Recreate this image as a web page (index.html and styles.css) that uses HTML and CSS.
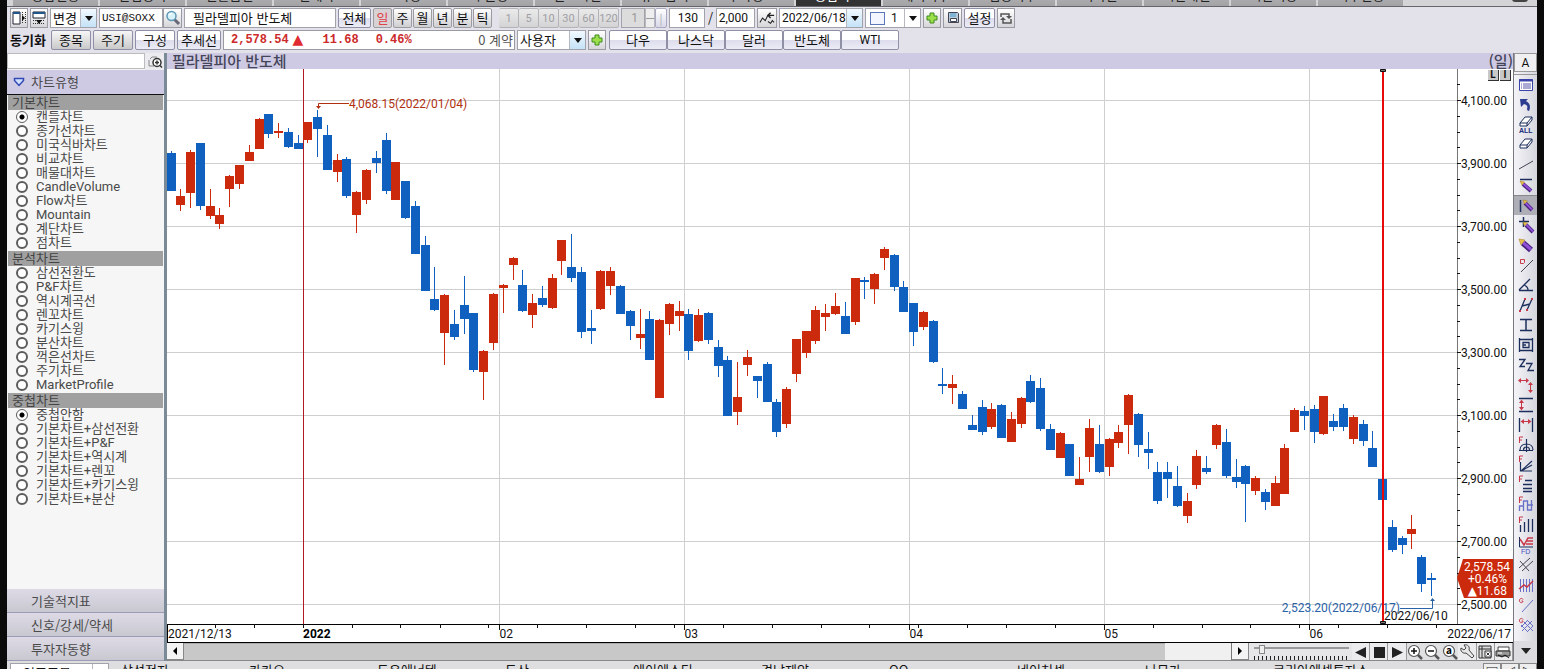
FILE: index.html
```html
<!DOCTYPE html>
<html lang="ko">
<head>
<meta charset="utf-8">
<title>필라델피아 반도체</title>
<link rel="stylesheet" href="styles.css">
</head>
<body>
<div class="shell">
  <nav class="tabs" aria-label="화면">
    <a href="#">종합현황</a><a href="#">관심종목</a><a href="#">선물옵션</a><a href="#">현재가</a><a href="#">호가창</a><a href="#">주문창</a><a href="#">잔고확인</a><a href="#">뉴스검색</a><a href="#">투자정보</a><a href="#" class="current">종합차트</a><a href="#">해외지수</a><a href="#">업종지수</a><a href="#">외국인</a><a href="#">시간대별</a><a href="#">시간외창</a><a href="#">지수현황</a>
    <span class="tabs-knob"></span>
  </nav>

  <div class="bar">
    <div class="row">
      <button class="ib" aria-label="왼쪽 패널"><svg viewBox="0 0 16 16"><path d="M2 2h7v12H2z" fill="#fff" stroke="#223"/><path d="M2 3h7" stroke="#258" stroke-width="2"/><path d="M11.500 2v12M14.500 2v12" stroke="#333" stroke-dasharray="1 1"/><path d="M11 5l3 3-3 3z" fill="#111"/></svg></button>
      <button class="ib" aria-label="위쪽 패널"><svg viewBox="0 0 16 16"><path d="M2 2h12v6H2z" fill="#fff" stroke="#223"/><path d="M2 3h12" stroke="#258" stroke-width="2"/><path d="M2 10.500h12M2 13.500h12" stroke="#333" stroke-dasharray="1 1"/><path d="M5 10h6l-3 4z" fill="#111"/></svg></button>
      <span class="combo w47"><select aria-label="변경"><option>변경</option></select><i class="drop blue"></i></span>
      <span class="joined"><input class="w64 mono" aria-label="종목코드" value="USI@SOXX"><button class="ib" aria-label="검색"><svg viewBox="0 0 16 16"><path d="M9 9l5 5" stroke="#667" stroke-width="3"/><circle cx="6.500" cy="6" r="4.500" fill="#d8f2fa" stroke="#5b98b5" stroke-width="1.500"/><path d="M4 5l3-2" stroke="#fff" stroke-width="1.500"/></svg></button></span>
      <input class="w152 name" aria-label="종목명" value="필라델피아 반도체">
      <button class="btn w33">전체</button>
      <span class="periods"><button class="key on">일</button><button class="key">주</button><button class="key">월</button><button class="key">년</button><button class="key">분</button><button class="key">틱</button></span>
      <span class="minutes"><button disabled>1</button><button disabled>5</button><button disabled>10</button><button disabled>30</button><button disabled>60</button><button disabled>120</button></span>
      <span class="joined spin"><input class="w24 num" aria-label="분 간격" value="1" disabled><button aria-label="간격 조절" class="updown"><i></i></button><button aria-label="구분" class="grip">|</button></span>
      <input class="w36 num" aria-label="봉 수" value="130">
      <span class="slash">/</span>
      <input class="w39 num" aria-label="전체 봉 수" value="2,000">
      <button class="ib w20" aria-label="차트 이동"><svg viewBox="0 0 18 16"><path d="M1 13l3-5 3 3 3-6M10 12l3 2 2-3 2 2" fill="none" stroke="#222" stroke-width="1.200"/><path d="M17 5h-6M13 2l-3 3 3 3" fill="none" stroke="#222" stroke-width="1.500"/></svg></button>
      <span class="combo w84"><select class="num" aria-label="날짜"><option>2022/06/18</option></select><i class="drop blue"></i></span>
      <span class="combo w56"><b class="swatch"></b><select class="num swatched" aria-label="선 굵기"><option>1</option></select><i class="drop"></i></span>
      <button class="ib" aria-label="추가"><svg viewBox="0 0 16 16"><path d="M6 3h4v3h3v4h-3v3H6v-3H3V6h3z" fill="#9be04a" stroke="#3f8a1c"/></svg></button>
      <button class="ib w19" aria-label="저장"><svg viewBox="0 0 16 16"><path d="M3.500 2.500h9l1 1v9h-10z" fill="#b9c9d6" stroke="#445"/><path d="M5 3h6v4H5z" fill="#7fb4d6"/><path d="M5.500 8.500h6v3h-6z" fill="#fff" stroke="#445"/></svg></button>
      <button class="btn w31">설정</button>
      <button class="ib" aria-label="새로고침"><svg viewBox="0 0 16 16"><path d="M3 7V4h8v3M13 9v4H5v-3" fill="none" stroke="#555" stroke-width="1.500"/><path d="M8 6h6l-3 3zM2 10h6L5 7z" fill="#555"/></svg></button>
    </div>
    <div class="row">
      <strong class="sync">동기화</strong>
      <button class="btn gray w40">종목</button>
      <button class="btn gray w40">주기</button>
      <button class="btn w40">구성</button>
      <button class="btn w44">추세선</button>
      <div class="quote"><b class="price">2,578.54</b><b class="tri">▲</b><b class="diff">11.68</b><b class="rate">0.46%</b><span class="qty">0 계약</span></div>
      <span class="combo w69"><select aria-label="사용자"><option>사용자</option></select><i class="drop blue"></i></span>
      <button class="ib" aria-label="사용자 추가"><svg viewBox="0 0 16 16"><path d="M6 3h4v3h3v4h-3v3H6v-3H3V6h3z" fill="#9be04a" stroke="#3f8a1c"/></svg></button>
      <span class="shortcuts"><button class="btn">다우</button><button class="btn">나스닥</button><button class="btn">달러</button><button class="btn">반도체</button><button class="btn latin">WTI</button></span>
    </div>
  </div>

  <div class="main">
    <aside class="side">
      <div class="find"><input aria-label="차트 검색"><button aria-label="검색"><svg viewBox="0 0 16 16"><path d="M3 5l2-2h5" fill="none" stroke="#888"/><path d="M2 6v6h5" fill="none" stroke="#888"/><circle cx="10" cy="8.500" r="4" fill="#fff" stroke="#333" stroke-width="1.500"/><path d="M8 8.500h4M10 6.500v4M13 11.500l2 2" stroke="#333" stroke-width="1.500"/></svg></button></div>
      <button class="fold open"><svg viewBox="0 0 12 10"><path d="M1.500 1.500h9v2L6 8.500l-4.500-5z" fill="#cfe0ff" stroke="#3348b5" stroke-width="1.500"/></svg>차트유형</button>
      <div class="types">
        <fieldset><legend>기본차트</legend>
          <label><input type="radio" name="basic" checked>캔들차트</label>
          <label><input type="radio" name="basic">종가선차트</label>
          <label><input type="radio" name="basic">미국식바차트</label>
          <label><input type="radio" name="basic">비교차트</label>
          <label><input type="radio" name="basic">매물대차트</label>
          <label><input type="radio" name="basic">CandleVolume</label>
          <label><input type="radio" name="basic">Flow차트</label>
          <label><input type="radio" name="basic">Mountain</label>
          <label><input type="radio" name="basic">계단차트</label>
          <label><input type="radio" name="basic">점차트</label>
        </fieldset>
        <fieldset><legend>분석차트</legend>
          <label><input type="radio" name="study">삼선전환도</label>
          <label><input type="radio" name="study">P&amp;F차트</label>
          <label><input type="radio" name="study">역시계곡선</label>
          <label><input type="radio" name="study">렌꼬차트</label>
          <label><input type="radio" name="study">카기스윙</label>
          <label><input type="radio" name="study">분산차트</label>
          <label><input type="radio" name="study">꺽은선차트</label>
          <label><input type="radio" name="study">주기차트</label>
          <label><input type="radio" name="study">MarketProfile</label>
        </fieldset>
        <fieldset><legend>중첩차트</legend>
          <label><input type="radio" name="overlay" checked>중첩안함</label>
          <label><input type="radio" name="overlay">기본차트+삼선전환</label>
          <label><input type="radio" name="overlay">기본차트+P&amp;F</label>
          <label><input type="radio" name="overlay">기본차트+역시계</label>
          <label><input type="radio" name="overlay">기본차트+렌꼬</label>
          <label><input type="radio" name="overlay">기본차트+카기스윙</label>
          <label><input type="radio" name="overlay">기본차트+분산</label>
        </fieldset>
      </div>
      <button class="fold">기술적지표</button>
      <button class="fold">신호/강세/약세</button>
      <button class="fold">투자자동향</button>
    </aside>

    <section class="stage">
      <header class="title"><h1>필라델피아 반도체</h1><b>(일)</b></header>
      <div class="plot">
        <svg id="chart" viewBox="167 69 1346 574" role="img" aria-label="일봉 차트"></svg>
        <div class="scale"><button>L</button><button>I</button></div>
      </div>
      <div class="scroll">
        <button class="arrow" aria-label="이전"><svg viewBox="0 0 16 16"><path d="M10 4v8L6 8z"/></svg></button>
        <div class="track"><span class="thumb"></span><span class="rest"></span></div>
        <button class="arrow" aria-label="다음"><svg viewBox="0 0 16 16"><path d="M6 4v8l4-4z"/></svg></button>
        <div class="zoomer"><input type="range" aria-label="확대" min="0" max="100" value="6"><i></i></div>
        <div class="tools">
          <button aria-label="뒤로"><svg viewBox="0 0 18 18"><path d="M14 4v11L3 9.500z" fill="#222"/></svg></button>
          <button aria-label="정지"><svg viewBox="0 0 18 18"><path d="M4 4h11v11H4z" fill="#222"/></svg></button>
          <button aria-label="재생"><svg viewBox="0 0 18 18"><path d="M4 4v11l11-5.500z" fill="#222"/></svg></button>
          <button class="flat" aria-label="확대"><svg viewBox="0 0 18 18"><path d="M11 11l5 5" stroke="#555" stroke-width="2.500"/><circle cx="8" cy="8" r="5.500" fill="#fff" stroke="#555" stroke-width="1.200"/><path d="M5 8h6M8 5v6" stroke="#111" stroke-width="1.500"/></svg></button>
          <button class="flat" aria-label="축소"><svg viewBox="0 0 18 18"><path d="M11 11l5 5" stroke="#555" stroke-width="2.500"/><circle cx="8" cy="8" r="5.500" fill="#fff" stroke="#555" stroke-width="1.200"/><path d="M5 8h6" stroke="#111" stroke-width="1.500"/></svg></button>
          <button class="flat" aria-label="전체 보기"><svg viewBox="0 0 18 18"><path d="M11 11l5 5" stroke="#555" stroke-width="2.500"/><circle cx="8" cy="8" r="5.500" fill="#fff" stroke="#555" stroke-width="1.200"/><text x="5" y="11" font-size="10" font-weight="bold">a</text></svg></button>
          <button aria-label="도구"><svg viewBox="0 0 18 18"><path d="M3 5l3 2 2-2-2-3c4-1 6 2 5 5l5 6-2 2-6-5C5 11 2 8 3 5z" fill="#e8e8e8" stroke="#444"/></svg></button>
          <button aria-label="저장"><svg viewBox="0 0 18 18"><path d="M3 3h12v12H3z" fill="#ddd" stroke="#333"/><path d="M3 6h12M6 3v12" stroke="#333"/><path d="M9 8h6v6H9z" fill="#fff" stroke="#333"/><path d="M10.500 9.500l3 3m0-3l-3 3" stroke="#333"/></svg></button>
          <button aria-label="인쇄"><svg viewBox="0 0 18 18"><path d="M4 4h11v4H4z" fill="#fff" stroke="#444"/><path d="M2 8h14v5H2z" fill="#999" stroke="#333"/><path d="M4 12l4 2 3-2 4 3" fill="none" stroke="#111"/><path d="M4 10h4" stroke="#fff"/></svg></button>
        </div>
      </div>
    </section>

    <aside class="draw">
      <button class="mode">A</button>
      <div class="pens">
        <button aria-label="목록"><svg viewBox="0 0 20 20"><path d="M3.500 4.500h13v11h-13z" fill="#fff" stroke="#3a44a8"/><path d="M3 5.500h14" stroke="#3a44a8" stroke-width="2"/><path d="M5 9h1m1 0h8M5 11h1m1 0h8M5 13h1m1 0h8" stroke="#55a"/></svg></button>
        <button aria-label="되돌리기"><svg viewBox="0 0 20 20"><path d="M4 4h8l-2 2c4 2 5 6 3 10-1 0-2-1-2-2 1-3 0-4-3-5l-3 3z" fill="#2c3d8f"/></svg></button>
        <button aria-label="모두 지우기"><svg viewBox="0 0 20 20"><path d="M4 8l5-6h7l-5 6zM4 8v3h7V8M11 11l5-6V2" fill="#fff" stroke="#1c2f5c"/><text x="3" y="18" font-size="7" font-weight="bold" fill="#1c2f7c">ALL</text></svg></button>
        <button aria-label="지우기"><svg viewBox="0 0 20 20"><path d="M4 10l5-6h7l-5 6zM4 10v3h7v-3M11 13l5-6V4" fill="#fff" stroke="#1c2f5c"/></svg></button>
        <button aria-label="추세선"><svg viewBox="0 0 20 20"><path d="M3 14l14-8" stroke="#445" fill="none"/></svg></button>
        <button aria-label="수평선"><svg viewBox="0 0 20 20"><path d="M4 4.500h12" stroke="#1c2f5c" stroke-width="1.500"/><path d="M7 9l8 7" stroke="#4a2480" stroke-width="4"/><path d="M7 8.500l8 7" stroke="#9050d8" stroke-width="2"/><path d="M4 6l4.500 1L6 10z" fill="#e8c24a" stroke="#a07820" stroke-width=".5"/></svg></button>
        <button class="on" aria-label="수직선"><svg viewBox="0 0 20 20"><path d="M4.500 4v12" stroke="#1c2f5c" stroke-width="1.500"/><path d="M9 7l7 7" stroke="#4a2480" stroke-width="4"/><path d="M9 6.500l7 7" stroke="#9050d8" stroke-width="2"/><path d="M7 4l4.500 1L8.500 8z" fill="#e8c24a" stroke="#a07820" stroke-width=".5"/></svg></button>
        <button aria-label="십자선"><svg viewBox="0 0 20 20"><path d="M3 6.500h10M7.500 2v10" stroke="#1c2f5c" stroke-width="1.500"/><path d="M10 10l7 7" stroke="#4a2480" stroke-width="4"/><path d="M10 9.500l7 7" stroke="#9050d8" stroke-width="2"/><path d="M7 7l4.500 1-3 3z" fill="#e8c24a" stroke="#a07820" stroke-width=".5"/></svg></button>
        <button aria-label="펜"><svg viewBox="0 0 20 20"><path d="M7 8l8 7" stroke="#4a2480" stroke-width="6"/><path d="M7 7.500l8 7" stroke="#9050d8" stroke-width="3"/><path d="M3 4l6 1-4 5z" fill="#e8c24a" stroke="#a07820" stroke-width=".5"/></svg></button>
        <button aria-label="선분"><svg viewBox="0 0 20 20"><path d="M4.500 4.500h4v3l-1 1h-3z" fill="none" stroke="#c8394a"/><path d="M5 17L17 5" stroke="#445"/></svg></button>
        <button aria-label="각도선"><svg viewBox="0 0 20 20"><path d="M3 15.500h14M3 15L14 4M8 10c3 1 4 3 4 5" fill="none" stroke="#1c2f5c" stroke-width="1.300"/></svg></button>
        <button aria-label="평행선"><svg viewBox="0 0 20 20"><path d="M4 16L9 4M11 15l5-11M6 11l8-2" fill="none" stroke="#1c2f5c" stroke-width="1.300"/><path d="M3 15h2v2H3zM8 3h2v2H8zM10 14h2v2h-2zM15 3h2v2h-2z" fill="#c8394a"/></svg></button>
        <button aria-label="구간"><svg viewBox="0 0 20 20"><path d="M4 4.500h12M4 15.500h12M10 4v12" stroke="#1c2f5c" stroke-width="1.500"/></svg></button>
        <button aria-label="사각형"><svg viewBox="0 0 20 20"><path d="M3.500 3v14M16.500 3v14M3 4.500h14M3 15.500h14M7 7.500h6v5H7zM7 10h3" fill="none" stroke="#1c2f5c" stroke-width="1.300"/></svg></button>
        <button aria-label="지그재그"><svg viewBox="0 0 20 20"><path d="M3 4.500h6l-5 7h5M10 8.500h6l-4 7h6" fill="none" stroke="#1c2f5c" stroke-width="1.300"/></svg></button>
        <button aria-label="이동"><svg viewBox="0 0 20 20"><path d="M4 5.500h8M14.500 9v7" stroke="#c8394a"/><path d="M2 5.500L5 3v5zM13 5.500L10 3v5zM14.500 7L12 10h5zM14.500 18L12 15h5z" fill="#c8394a"/></svg></button>
        <button aria-label="가격폭"><svg viewBox="0 0 20 20"><path d="M3 3.500h14M3 16.500h14" stroke="#1c2f5c" stroke-width="1.300"/><path d="M5.500 6v8" stroke="#c8394a"/><path d="M5.500 4.500L3 8h5zM5.500 15.500L3 12h5z" fill="#c8394a"/></svg></button>
        <button aria-label="기간폭"><svg viewBox="0 0 20 20"><path d="M3.500 3v14M16.500 3v14" stroke="#1c2f5c" stroke-width="1.300"/><path d="M6 6.500h8" stroke="#c8394a"/><path d="M4.500 6.500L8 4v5zM15.500 6.500L12 4v5z" fill="#c8394a"/></svg></button>
        <button aria-label="피보나치 원"><svg viewBox="0 0 20 20"><path d="M7 2H3.500v6M3.500 5H6" fill="none" stroke="#c8394a"/><path d="M3 15.500h14M10.500 4v13M4 15c0-8 13-8 13 0M7.500 15c0-4 6-4 6 0" fill="none" stroke="#1c2f5c" stroke-width="1.200"/></svg></button>
        <button aria-label="피보나치 팬"><svg viewBox="0 0 20 20"><path d="M7 1H3.500v6M3.500 4H6" fill="none" stroke="#c8394a"/><path d="M4.500 7v9H16M5 16L16 6M5 16l11-6" fill="none" stroke="#1c2f5c" stroke-width="1.200"/></svg></button>
        <button aria-label="피보나치 되돌림"><svg viewBox="0 0 20 20"><path d="M7 1H3.500v6M3.500 4H6" fill="none" stroke="#c8394a"/><path d="M9 5.500h7M7 9.500h9M7 13.500h9M7 16.500h9" stroke="#1c2f5c" stroke-width="1.500"/></svg></button>
        <button aria-label="피보나치 목표"><svg viewBox="0 0 20 20"><path d="M7 2H3.500v6M3.500 5H6" fill="none" stroke="#c8394a"/><path d="M3.500 16V11h4v5M7.500 14V6h4v9h4V5M11 10h6" fill="none" stroke="#6870c8" stroke-width="1.300"/></svg></button>
        <button aria-label="피보나치 시간대"><svg viewBox="0 0 20 20"><path d="M7 2H3.500v6M3.500 5H6" fill="none" stroke="#c8394a"/><path d="M4.500 10v7M8.500 7v10M12.500 4v13M16.500 4v13" stroke="#1c2f5c" stroke-width="1.300"/></svg></button>
        <button aria-label="FD"><svg viewBox="0 0 20 20"><path d="M3.500 2v10H17" fill="none" stroke="#1c2f5c"/><path d="M4 4l4 6 4-7h5M10 6h7M10 9h7" fill="none" stroke="#c8394a" stroke-width="1.500"/><text x="5" y="19" font-size="7" fill="#444cc0">FD</text></svg></button>
        <button aria-label="교차선"><svg viewBox="0 0 20 20"><path d="M3 13L14 3M6 16L17 6M4 6l9 10" fill="none" stroke="#445"/></svg></button>
        <button aria-label="회귀선"><svg viewBox="0 0 20 20"><path d="M4.500 4v13M7.500 4v13M10.500 4v13M13.500 4v13M16.500 4v13" stroke="#6870c8"/><path d="M3 14l5-4 3 2 6-6" fill="none" stroke="#c8394a" stroke-width="1.500"/></svg></button>
        <button aria-label="갠 라인"><svg viewBox="0 0 20 20"><path d="M7 4.500c-1-2-4-1-3.500 1.500C4 8.500 7 8 7 6H5.500" fill="none" stroke="#c8394a"/><path d="M6 17L17 5" stroke="#6870c8"/></svg></button>
        <button aria-label="갠 그리드"><svg viewBox="0 0 20 20"><path d="M7 4.500c-1-2-4-1-3.500 1.500C4 8.500 7 8 7 6H5.500" fill="none" stroke="#c8394a"/><path d="M5 12l7-7M6 16L16 6M11 17l6-6M8 7l9 9M5 10l7 7M12 6l5 5" stroke="#6870c8"/></svg></button>
      </div>
      <button class="more" aria-label="더 보기"><i></i></button>
    </aside>
  </div>

  <footer class="ticker">
    <span class="combo watch"><select aria-label="관심종목"><option>업종종목</option></select><i class="drop"></i></span>
    <div class="names"><span>삼성전자</span><span>카카오</span><span>두유에너텍</span><span>두산</span><span>에이에스티</span><span>경남제약</span><span>OO</span><span>네이처셀</span><span>나무가</span><span>코리아에셋투자스</span></div>
    <span class="pager"><button>□</button><button>◁</button><button>▷</button></span>
  </footer>
</div>
<script src="chart.js"></script>
</body>
</html>
```
FILE: styles.css
```css
* { box-sizing: border-box; }
body { margin: 0; background: #0a0a0a; color: #111; font: 13px/14px "Noto Sans CJK KR", sans-serif; }
button, input, select { margin: 0; padding: 0; font: inherit; color: inherit; border-radius: 0; }
button { display: flex; align-items: center; justify-content: center; white-space: nowrap; overflow: hidden; }
input, select { min-width: 0; border: 1px solid #a2a2aa; background: #fff; }
i { font-style: normal; }

.shell { display: flex; flex-direction: column; height: 100vh; margin: 0 7px; overflow: hidden; background: #e3e2ea; }

.tabs { display: flex; align-items: flex-end; gap: 2px; height: 7px; padding-left: 6px; overflow: hidden; background: #d4d4d6; border-bottom: 1px solid #66666a; flex: none; }
.tabs a { flex: 0 0 85px; height: 22px; line-height: 21px; text-align: center; color: #222; text-decoration: none; background: linear-gradient(#c4c4c6, #a2a2a4); }
.tabs .current { background: #333; color: #fff; }
.tabs-knob { width: 16px; height: 8px; margin: 0 9px 4px auto; border-radius: 3px; background: #444; }

.bar { display: grid; gap: 2px; padding: 1px 3px 3px; flex: none; }
.row { display: flex; gap: 2px; height: 20px; }
.row > *, .joined > * { flex: none; }
.w20 { width: 20px; } .w24 { width: 24px; } .w31 { width: 31px; } .w33 { width: 33px; }
.w36 { width: 36px; } .w39 { width: 39px; } .w40 { width: 40px; } .w44 { width: 44px; } .w47 { width: 47px; }
.w56 { width: 56px; } .w64 { width: 64px; } .w69 { width: 69px; } .w84 { width: 84px; } .w152 { width: 152px; }
.btn { border: 1px solid #8f8fa6; border-radius: 2px; background: linear-gradient(#fff 50%, #dcdcec 50%, #ececf6); }
.btn.gray { background: linear-gradient(#f6f6f6, #c9c9cb); }
.ib { width: 18px; border: 1px solid #9a9aa2; background: linear-gradient(#fff, #d6d6da); }
.ib.w19 { width: 19px; }
.ib.w20 { width: 20px; }
.ib svg { flex: none; width: 16px; height: 16px; }
.joined, .periods, .minutes, .shortcuts { display: flex; }
.joined .ib { width: 19px; }
.mono { padding-left: 2px; font: 11px "Liberation Mono", monospace; }
.num { font: 12px Roboto, sans-serif; }
input.num { text-align: right; padding-right: 6px; }
.name { padding-left: 8px; }
.slash { width: 7px; text-align: center; line-height: 19px; }
.periods { gap: 1px; width: 119px; }
.key { flex: 1; border: 1px solid #9b9ba2; border-radius: 2px; background: linear-gradient(#fff, #cfcfd2); }
.key.on { background: #d8d2d4; color: #e0404a; }
.minutes { margin-left: 5px; width: 120px; }
.minutes button { flex: 1; min-width: 0; border: 1px solid #b4b4b8; border-width: 1px 1px 1px 0; border-radius: 2px; background: linear-gradient(#eaeaea, #d4d4d6); color: #a0a0a4; font: 11px Roboto, sans-serif; }
.spin input { background: #dcdcdc; color: #999; }
.updown { width: 10px; border: 1px solid #b8b8bc; background: #eee; }
.updown i { width: 8px; height: 1px; background: #999; }
.grip { width: 12px; border: 1px solid #a8a8c0; border-radius: 2px; background: linear-gradient(#fff, #d8d8ea); color: #aaa; font-size: 11px; }

.combo { position: relative; display: flex; }
.combo select { width: 100%; appearance: none; padding-left: 2px; }
.combo .swatched { padding-left: 25px; }
.swatch { position: absolute; left: 5px; top: 4px; width: 15px; height: 13px; border: 1px solid #5a78b8; background: #f4f6ff; }
.drop { position: absolute; right: 1px; top: 1px; bottom: 1px; width: 16px; border-left: 1px solid #b8b8c0; background: #fff; pointer-events: none; }
.drop.blue { background: linear-gradient(#f2f9ff, #c4e2f6); }
.drop::after { content: ""; position: absolute; left: 4px; top: 7px; border: 4px solid transparent; border-top: 5px solid #111; border-bottom: 0; }

.sync { width: 39px; line-height: 19px; white-space: nowrap; }
.quote { display: flex; width: 292px; border: 1px solid #9a9aa2; background: #fff; padding: 0 1px 0 7px; line-height: 18px; color: #cc2a2a; font-family: "Liberation Mono", monospace; font-size: 12px; }
.tri { margin-left: 4px; width: 14px; font: 14px/16px "DejaVu Sans", sans-serif; color: #e02c30; }
.diff { margin-left: 16px; }
.rate { margin-left: 17px; }
.qty { margin-left: auto; color: #555; font: 13px/18px "Noto Sans CJK KR", sans-serif; }
.shortcuts { margin-left: 1px; }
.shortcuts .btn { width: 58px; }
.latin { font: 12px Roboto, sans-serif; }

.main { display: flex; flex: 1; min-height: 0; }
.side { display: flex; flex-direction: column; flex: 0 0 157px; min-width: 0; background: #f6f6f6; color: #4a4a4a; }
.find { display: flex; height: 17px; flex: none; }
.find input { flex: 1; height: 16px; border: 1px solid #bbb; }
.find button { width: 19px; border: 0; background: #ececf0; }
.find svg { flex: none; width: 16px; height: 16px; }
.fold { flex: none; height: 24px; justify-content: flex-start; border: 0; border-bottom: 1px solid #9a9cb4; padding-left: 24px; background: linear-gradient(#dddae6, #c9c8d0); }
.fold.open { height: 25px; gap: 6px; padding-left: 6px; border-bottom: 1px solid #111; background: #cfcae3; }
.fold svg { width: 12px; height: 10px; }
.types { flex: 1; min-height: 0; overflow: hidden; }
fieldset { min-width: 0; margin: 0 0 1px; padding: 0; border: 0; }
legend { width: calc(100% - 2px); height: 15px; margin-left: 1px; padding: 0 4px; line-height: 14px; background: #a0a0a0; color: #444; }
.types label { display: flex; align-items: center; gap: 8px; height: 14px; padding-left: 9px; white-space: nowrap; font-family: Roboto, "Noto Sans CJK KR", sans-serif; }
.types input { appearance: none; width: 12px; height: 12px; border: 2px solid #5c5c5c; border-radius: 50%; background: #fff; }
.types input:checked { border-width: 1px; background: radial-gradient(circle, #000 2px, #fff 3px); }

.stage { flex: 1; min-width: 0; display: flex; flex-direction: column; border-left: 3px solid #7b8a97; background: #fff; }
.title { display: flex; justify-content: space-between; height: 16px; padding: 0 0 0 5px; background: #cfcae3; color: #45455a; font-size: 15px; line-height: 16px; flex: none; }
.title h1 { margin: 0; font-size: 15px; line-height: 16px; font-weight: 500; }
.title b { font-weight: 500; }
.plot { position: relative; flex: 1; min-height: 0; }
.plot > svg { display: block; width: 100%; }
.plot text { font: 12px Roboto, "DejaVu Sans", sans-serif; }
.plot .year { font-weight: bold; }
.scale { position: absolute; top: 1px; right: 2px; display: flex; gap: 1px; }
.scale button { width: 11px; height: 11px; border: 1px solid #333; border-width: 0 1px 1px 0; background: #c8c8c8; font: bold 10px/10px Roboto, sans-serif; }

.scroll { display: flex; height: 18px; flex: none; background: #e6e6e8; border-bottom: 1px solid #888; }
.arrow { width: 17px; border: 1px solid #888; border-width: 0 1px 1px 0; background: #f4f4f4; }
.arrow svg { flex: none; width: 16px; height: 16px; }
.track { display: flex; flex: 1; }
.thumb { flex: 1; background: #c8c8c8; border-top: 1px solid #aaa; }
.rest { width: 67px; background: #f0f0f0; border-right: 1px solid #777; }
.zoomer { display: grid; align-content: start; gap: 2px; width: 103px; padding: 2px 3px 0 5px; }
.zoomer input { appearance: none; width: 95px; height: 9px; border: 0; background: linear-gradient(#999, #999) 0 2px / 100% 2px no-repeat; }
.zoomer input::-webkit-slider-thumb { appearance: none; width: 6px; height: 9px; border: 1px solid #888; background: #eee; }
.zoomer i { height: 4px; background: repeating-linear-gradient(90deg, #222 0 1px, transparent 1px 4px); }
.tools { display: flex; width: 161px; }
.tools button { flex: 1; min-width: 0; border: 0; border-right: 1px solid #999; background: #ececee; }
.tools .flat { border: 0; background: #e0e0e2; }
.tools svg { flex: none; width: 18px; height: 18px; }

.draw { display: flex; flex-direction: column; flex: 0 0 24px; border-left: 1px solid #77777f; background: linear-gradient(90deg, #f4f4f8, #d6d6de); }
.mode { height: 19px; border: 1px solid #999; background: #f0f0f2; font: 12px Roboto, sans-serif; flex: none; }
.pens { display: grid; margin-top: 2px; border-top: 1px solid #999; }
.pens button { height: 20px; border: 0; background: none; }
.pens .on { background: #aeaeb6; border-top: 1px solid #888; }
.pens svg { width: 20px; height: 20px; flex: none; }
.pens text { font-family: "Liberation Sans", sans-serif; }
.more { height: 20px; margin-top: auto; border: 0; background: #dcdce0; }
.more i { border: 5px solid transparent; border-top: 6px solid #222; border-bottom: 0; }

.ticker { display: flex; align-items: flex-start; height: 8px; flex: none; overflow: hidden; padding: 2px 0 0 3px; background: #dedee0; }
.watch { flex: 0 0 99px; height: 20px; }
.watch select { padding-left: 12px; }
.names { display: grid; grid-template-columns: repeat(10, 128px); flex: 1; padding-left: 12px; line-height: 14px; overflow: hidden; }
.pager { display: flex; width: 54px; }
.pager button { flex: 1; height: 18px; border: 1px solid #888; background: #eee; }
```
FILE: chart.js
```js
// direction (u = up, d = down), high, body top, body bottom, low
const candles = `
d 151 153 191 191|u 189 196 205 211|u 150 152 193 208|d 143 143 206 210|u 189 206 216 219|u 208 215 224 229|u 175 176 189 207|u 165 165 184 189|u 145 152 161 161|u 118 119 149 149|
d 114 114 134 138|u 123 131 133 138|d 128 132 147 148|d 135 143 149 149|u 122 122 140 143|d 110 117 129 157|d 125 135 170 170|u 154 160 172 182|d 157 159 196 198|u 191 192 215 233|
u 169 170 200 204|d 151 158 163 173|d 133 140 191 194|u 162 162 200 200|d 181 181 218 219|d 201 206 254 254|d 236 245 291 291|d 267 299 310 311|u 294 295 333 365|d 310 324 337 340|
d 276 305 319 334|d 313 313 370 372|u 350 351 372 400|u 293 294 343 350|u 284 285 288 313|u 257 258 265 280|d 270 285 311 312|u 294 303 315 328|d 286 298 305 307|u 274 278 308 309|
u 240 240 261 275|d 234 267 278 282|d 267 272 332 338|d 310 328 331 344|u 270 271 309 310|u 267 271 286 295|d 285 286 314 314|d 310 311 326 340|u 309 334 338 349|d 311 319 360 360|
u 319 320 398 398|u 303 304 324 335|u 301 311 316 331|d 309 314 351 360|u 309 315 341 342|d 312 313 340 344|d 340 347 366 377|d 356 360 416 416|u 362 397 412 425|u 350 357 365 376|
d 376 376 381 398|d 362 364 402 402|d 399 402 432 437|u 387 389 424 428|u 339 339 374 382|u 331 331 353 358|u 306 310 341 344|u 304 313 317 331|u 293 306 314 315|d 302 316 334 334|
u 278 278 322 325|d 277 280 282 299|u 273 274 289 304|u 247 249 258 270|d 254 255 287 291|d 281 287 312 312|d 303 303 332 346|u 311 312 327 330|d 320 321 362 363|d 368 384 386 394|
u 375 384 388 404|d 391 394 409 409|d 415 425 430 430|d 400 407 432 435|u 403 409 427 429|d 404 405 438 438|u 412 419 442 442|u 397 398 424 428|d 375 381 402 403|d 378 388 429 431|
d 424 429 450 450|u 432 433 458 458|d 444 444 476 476|u 457 479 485 485|u 419 428 457 472|d 425 444 472 473|u 438 439 467 476|u 425 432 443 448|u 394 395 425 454|d 413 414 445 457|
d 432 449 453 469|d 462 472 501 504|d 462 472 479 498|d 466 486 506 507|u 493 501 516 523|u 450 456 485 489|d 456 468 472 474|u 424 425 445 449|d 429 442 476 478|d 459 477 482 488|
d 465 466 484 522|u 476 478 491 495|d 489 492 502 510|u 476 483 506 506|u 444 448 494 494|u 408 410 432 432|d 406 411 416 430|d 405 409 432 443|u 396 396 434 435|d 414 421 427 431|
d 404 408 427 431|u 415 417 439 444|d 420 424 441 446|d 431 448 467 467|d 479 479 500 500|d 520 527 550 552|d 536 538 545 554|u 515 529 534 549|d 555 557 584 592|d 573 578 580 596`
  .trim().split("|").map(row => row.trim().split(" "));

const step = 9.77;
const centre = i => Math.round(170.6 + i * step);
const line = (x1, y1, x2, y2, stroke, width = 1) =>
  `<path d="M${x1} ${y1}L${x2} ${y2}" stroke="${stroke}" stroke-width="${width}"/>`;
const text = (x, y, value, fill = "#111", extra = "") =>
  `<text x="${x}" y="${y}" fill="${fill}" ${extra}>${value}</text>`;

let out = "";

// price grid and labels
for (let k = 0; k < 9; k++) {
  const y = 100.5 + k * 63;
  out += line(167, y, 1457, y, "#cfcfcf");
  out += text(1461, y + 4, `${(4100 - k * 200).toLocaleString("en-US")}.00`);
}
out += line(1457.5, 69, 1457.5, 624, "#777");
for (let k = -1; k < 33; k++) {
  const y = Math.round(100 + k * 15.75) + 0.5;
  out += line(1457, y, k % 4 ? 1460 : 1461, y, "#111");
}

// months
const months = [[499.5, "02"], [684.5, "03"], [909.5, "04"], [1104.5, "05"], [1309.5, "06"]];
for (const [x, name] of months) {
  out += line(x, 69, x, 624, "#cfcfcf") + line(x, 624, x, 630, "#111") + text(x, 638, name);
}
out += line(303.5, 69, 303.5, 625, "#b01822");

// candles
candles.forEach(([dir, high, top, bottom, low], i) => {
  const x = centre(i);
  const left = Math.max(167, x - 4);
  const fill = dir === "u" ? "#cc2a0c" : "#1060bf";
  out += `<path d="M${x} ${high}h1V${low}h-1zM${left} ${top}H${x + 5}V${bottom}H${left}z" fill="${fill}"/>`;
});

// time axis
out += line(167, 624.5, 1513, 624.5, "#000") + line(167, 642.5, 1513, 642.5, "#000") + line(167.5, 624, 167.5, 643, "#000");
for (const i of [5, 9, 14, 19, 24, 28, 33, 38, 43, 48, 52, 57, 62, 67, 72, 77, 82, 86, 91, 96, 101, 106, 111, 116, 120, 125, 130]) {
  const x = Math.round(166 + i * step) + 0.5;
  out += line(x, 624, x, 628, "#111");
}
out += text(168, 638, "2021/12/13") + text(303, 638, "2022", "#000", 'class="year"') + text(1511, 638, "2022/06/17", "#111", 'text-anchor="end"');

// extremes
out += `<path d="M349 103.500H318.500V107" fill="none" stroke="#b03010"/><path d="M316 106h5l-2.500 3z" fill="#b03010"/>` + text(349, 108, "4,068.15(2022/01/04)", "#b03010");
out += text(1400, 612, "2,523.20(2022/06/17)", "#2a62a8", 'text-anchor="end"') + `<path d="M1400 608.500H1432.500V600" fill="none" stroke="#2a62a8"/><path d="M1430 601h5l-2.500-3z" fill="#2a62a8"/>`;

// cursor
out += `<path d="M1382 69h2V624h-2z" fill="#e60a0a"/><path d="M1380.500 69.500h5v2h-5zM1380.500 621.500h5v2h-5z" fill="#777" stroke="#111"/>`;
out += text(1384, 620, "2022/06/10");

// last price
out += `<path d="M1457 578l6-19h50v39h-49z" fill="#cc2a0c"/>`;
out += ["2,578.54", "+0.46%", "▲11.68"].map((t, i) =>
  text(1510 - (i ? 3 : 0), 571 + i * 12, t, "#fff", 'text-anchor="end"')).join("");

document.getElementById("chart").innerHTML = out;
```
